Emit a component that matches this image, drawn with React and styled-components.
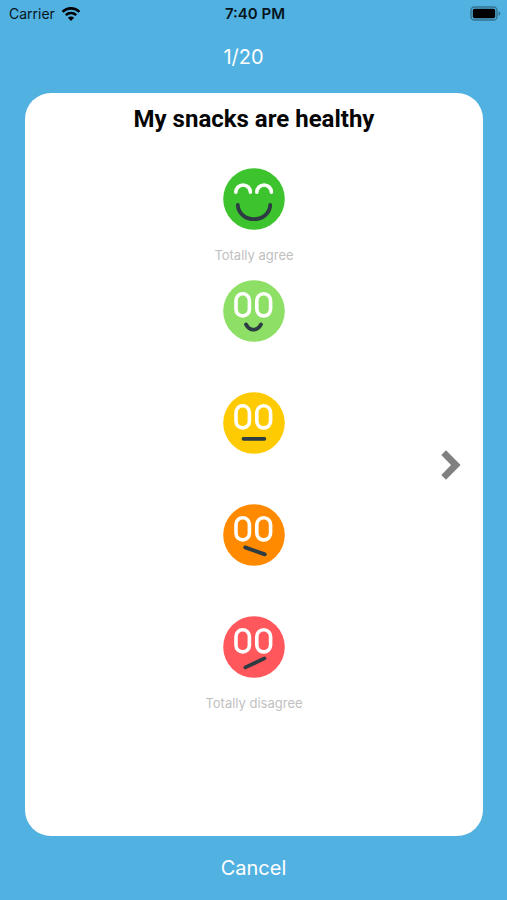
import React, { useState } from "react";
import styled, { createGlobalStyle } from "styled-components";

const GlobalStyle = createGlobalStyle`
  * {
    box-sizing: border-box;
  }
  body {
    margin: 0;
    background: #51b1e0;
    font-family: Inter, "Liberation Sans", sans-serif;
  }
`;

const Screen = styled.div`
  min-height: 100vh;
  display: flex;
  flex-direction: column;
  background: #51b1e0;
`;

const StatusBar = styled.header`
  display: grid;
  grid-template-columns: 1fr auto 1fr;
  align-items: center;
  height: 27px;
  padding: 0 6px 0 9px;
  color: #06141c;
  font-size: 14px;
`;

const Carrier = styled.div`
  display: flex;
  align-items: center;
  gap: 6px;
`;

const Clock = styled.time`
  font-size: 15px;
  font-weight: 600;
`;

const BatteryIcon = styled.svg`
  justify-self: end;
`;

const Progress = styled.p`
  margin: 0;
  padding: 18px 20px 23px 0;
  color: #fff;
  font-size: 20px;
  line-height: 25px;
  text-align: center;
`;

const Card = styled.main`
  flex: 1;
  display: grid;
  grid-template-columns: 1fr auto 1fr;
  margin: 0 24px 0 25px;
  padding: 0 22px;
  border-radius: 26px;
  background: #fff;
`;

const Question = styled.fieldset`
  grid-column: 2;
  min-width: 0;
  margin: 0;
  padding: 0;
  border: 0;
`;

const QuestionTitle = styled.legend`
  padding: 10px 0 33px;
  color: #050505;
  font-family: Roboto, "Liberation Sans", sans-serif;
  font-size: 24px;
  font-weight: 700;
  line-height: 32px;
`;

const Option = styled.label`
  display: flex;
  flex-direction: column;
  align-items: center;
  cursor: pointer;

  input {
    position: absolute;
    opacity: 0;
  }
  input:focus-visible + svg {
    outline: 2px solid #51b1e0;
    outline-offset: 3px;
    border-radius: 50%;
  }
`;

const FaceIcon = styled.svg`
  display: block;
  fill: none;
  stroke-linecap: round;
`;

const Caption = styled.span`
  height: 50px;
  color: #bfbfbf;
  font-size: 13px;
  line-height: 50px;
`;

const NextButton = styled.button`
  grid-column: 3;
  align-self: center;
  justify-self: end;
  display: block;
  padding: 0;
  border: 0;
  background: none;
  cursor: pointer;
`;

const CancelButton = styled.button`
  align-self: center;
  height: 64px;
  padding: 0 16px;
  border: 0;
  background: none;
  color: #fff;
  font-family: inherit;
  font-size: 20px;
  cursor: pointer;
`;

const OPEN_EYES = (
  <>
    <rect x="13" y="13.7" width="13.4" height="22.2" rx="6.7" />
    <rect x="33.8" y="13.7" width="13.8" height="22.2" rx="6.8" />
  </>
);

const SMILING_EYES = (
  <path d="M12.8 24.3a7.3 7.3 0 0 1 14.6 0M33.8 24.3a7.3 7.3 0 0 1 14.6 0" />
);

const OPTIONS = [
  {
    name: "Totally agree",
    caption: "Totally agree",
    color: "#3cc32e",
    eyes: SMILING_EYES,
    mouth: "M14.8 36.8a16.2 14.4 0 0 0 32.4 0",
  },
  {
    name: "Agree",
    color: "#8edf66",
    eyes: OPEN_EYES,
    mouth: "M23 44.4c3.6 7 11.4 7 15 0",
  },
  {
    name: "Neutral",
    color: "#fecb02",
    eyes: OPEN_EYES,
    mouth: "M20.5 46.8h20.8",
  },
  {
    name: "Disagree",
    color: "#ff8a00",
    eyes: OPEN_EYES,
    mouth: "M22.2 43.4l19.6 7",
  },
  {
    name: "Totally disagree",
    caption: "Totally disagree",
    color: "#ff575c",
    eyes: OPEN_EYES,
    mouth: "M22.4 51.4L41.4 42.4",
  },
];

const Face = ({ color, eyes, mouth }) => (
  <FaceIcon width="62" height="62" viewBox="0 0 62 62" aria-hidden="true">
    <circle cx="31" cy="31" r="30.8" fill={color} />
    <g stroke="#fff" strokeWidth="3.6">
      {eyes}
    </g>
    <path d={mouth} stroke="#2d3b43" strokeWidth="3.8" />
  </FaceIcon>
);

const Wifi = () => (
  <svg width="20" height="14" viewBox="0 0 20 14" fill="none" aria-hidden="true">
    <path d="M1.6 4.9a11.8 11.8 0 0 1 16.8 0" stroke="#000" strokeWidth="2.6" />
    <path d="M4.8 8.2a7.4 7.4 0 0 1 10.4 0" stroke="#000" strokeWidth="2.5" />
    <path d="M10 14L6.9 10.8a4.4 4.4 0 0 1 6.2 0z" fill="#000" />
  </svg>
);

const Battery = () => (
  <BatteryIcon width="31" height="15" viewBox="0 0 31 15" aria-hidden="true">
    <rect x="1" y="1" width="26" height="13" rx="3.6" fill="none" stroke="#35728f" strokeWidth="1.5" />
    <rect x="2.8" y="2.8" width="22.4" height="9.4" rx="1.8" fill="#000" />
    <path d="M28.5 5.2c2.4 1 2.4 3.6 0 4.6z" fill="#35728f" />
  </BatteryIcon>
);

const App = () => {
  const [answer, setAnswer] = useState(null);

  return (
    <Screen>
      <GlobalStyle />
      <StatusBar>
        <Carrier>
          Carrier
          <Wifi />
        </Carrier>
        <Clock>7:40 PM</Clock>
        <Battery />
      </StatusBar>
      <Progress>1/20</Progress>
      <Card>
        <Question>
          <QuestionTitle>My snacks are healthy</QuestionTitle>
          {OPTIONS.map((option) => (
            <Option key={option.name}>
              <input
                type="radio"
                name="answer"
                aria-label={option.name}
                checked={answer === option.name}
                onChange={() => setAnswer(option.name)}
              />
              <Face color={option.color} eyes={option.eyes} mouth={option.mouth} />
              <Caption>{option.caption}</Caption>
            </Option>
          ))}
        </Question>
        <NextButton type="button" aria-label="Next question">
          <svg width="20" height="30" viewBox="0 0 20 30" display="block">
            <path d="M0.3 5L5 0.3 19.6 15 5 29.7 0.3 25 10 15z" fill="#808080" />
          </svg>
        </NextButton>
      </Card>
      <CancelButton type="button">Cancel</CancelButton>
    </Screen>
  );
};

export default App;
